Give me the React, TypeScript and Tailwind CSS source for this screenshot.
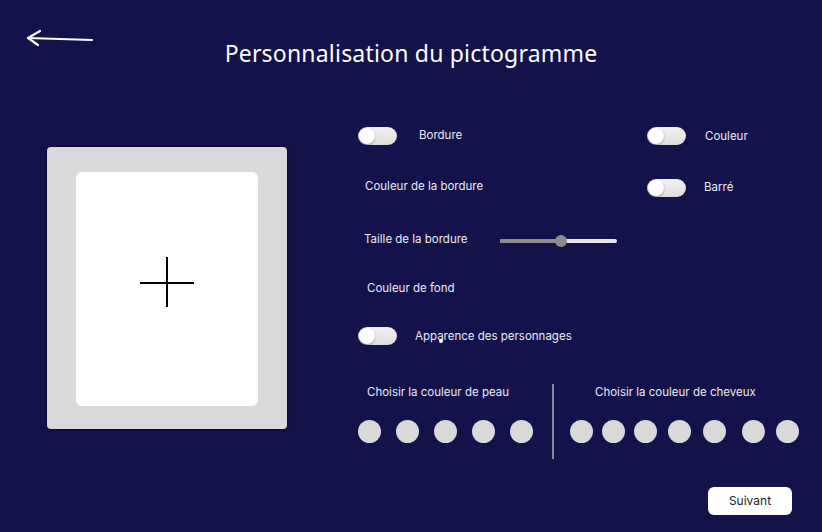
import React from 'react';

const Toggle = () => (
  <div className="relative w-[39px] h-[18px] rounded-full bg-gradient-to-b from-[#f2f2f2] to-[#dedede] shadow-[inset_0_0_1px_rgba(0,0,0,0.25)] shrink-0">
    <div className="absolute left-[1px] top-[1px] w-[16px] h-[16px] rounded-full bg-white shadow-[0_1px_2px_rgba(0,0,0,0.35)]" />
  </div>
);

const Dot = ({ className = '' }: { className?: string }) => (
  <div className={`w-[23px] h-[23px] rounded-full bg-[#d9d9d9] shrink-0 ${className}`} />
);

export default function App() {
  return (
    <div
      className="w-[822px] h-[532px] bg-[#13124a] text-[#ebebf2] overflow-hidden flex flex-col"
      style={{ fontFamily: 'Inter, "Noto Sans", sans-serif' }}
    >
      {/* Header */}
      <div className="grid grid-cols-[1fr_auto_1fr] pt-[28px]">
        <div className="pl-[25px] self-start">
          <svg width="70" height="20" viewBox="0 0 70 20" fill="none">
            <path d="M3 10 L67 12" stroke="white" strokeWidth="2.2" strokeLinecap="round" />
            <path d="M15 3 L3 10 L13 17" stroke="white" strokeWidth="2.2" strokeLinecap="round" strokeLinejoin="round" />
          </svg>
        </div>
        <h1
          className="mt-[10px] text-[23px] leading-[30px] font-normal text-white tracking-[0.2px]"
          style={{ fontFamily: '"Noto Sans", "Open Sans", sans-serif' }}
        >
          Personnalisation du pictogramme
        </h1>
        <div />
      </div>

      {/* Body */}
      <div className="flex">
        {/* Preview */}
        <div className="ml-[47px] mt-[79px] w-[240px] h-[282px] bg-[#d9d9d9] rounded-[4px] shadow-[0_0_1px_1px_rgba(0,0,0,0.35)] pl-[29px] pt-[25px]">
          <div className="w-[182px] h-[234px] bg-white rounded-[6px] pl-[64px] pt-[85px]">
            <svg width="54" height="50" viewBox="0 0 54 50">
              <path d="M0 26 H54" stroke="black" strokeWidth="2" />
              <path d="M27 0 V50" stroke="black" strokeWidth="2" />
            </svg>
          </div>
        </div>

        {/* Controls */}
        <div className="ml-[71px] mt-[43px] flex flex-col text-[11.5px]">
          <div className="h-[50px] flex items-center">
            <div className="w-[289px] flex items-center">
              <Toggle />
              <span className="ml-[22px] -mt-[1px]">Bordure</span>
            </div>
            <Toggle />
            <span className="ml-[19px] mt-[2px]">Couleur</span>
          </div>

          <div className="h-[51px] flex items-center">
            <div className="w-[289px] pl-[7px] mt-[1px]">Couleur de la bordure</div>
            <div className="flex items-center mt-[2px]">
              <Toggle />
              <span className="ml-[18px] mt-[1px]">Barré</span>
            </div>
          </div>

          <div className="h-[54px] flex items-center">
            <div className="w-[142px] pl-[6px] mt-[2px]">Taille de la bordure</div>
            <div className="relative w-[117px] h-[4px] mt-[4px] rounded-full bg-[#e6e6e6]">
              <div className="absolute left-0 top-0 h-[4px] w-[61px] rounded-full bg-[#8c8c8c]" />
              <div className="absolute left-[55px] top-[-4px] w-[12px] h-[12px] rounded-full bg-[#8c8c8c]" />
            </div>
          </div>

          <div className="h-[44px] flex items-center">
            <div className="pl-[9px] mt-[1px]">Couleur de fond</div>
          </div>

          <div className="h-[52px] flex items-center">
            <Toggle />
            <span className="relative ml-[18px] mt-[2px]">
              Apparence des personnages
              <span className="absolute left-[24px] top-[11px] w-[4px] h-[4px] rounded-full bg-white" />
            </span>
          </div>

          {/* Colour choices */}
          <div className="mt-[22px] flex">
            <div className="w-[194px] flex flex-col">
              <div className="pl-[9px] leading-[16px]">Choisir la couleur de peau</div>
              <div className="flex mt-[20px] gap-[15px]">
                <Dot />
                <Dot />
                <Dot />
                <Dot />
                <Dot />
              </div>
            </div>
            <div className="w-[2px] h-[75px] bg-[#8a8a8a]" />
            <div className="flex flex-col pl-[16px]">
              <div className="pl-[25px] leading-[16px]">Choisir la couleur de cheveux</div>
              <div className="flex mt-[20px]">
                <Dot />
                <Dot className="ml-[9px]" />
                <Dot className="ml-[9px]" />
                <Dot className="ml-[11px]" />
                <Dot className="ml-[12px]" />
                <Dot className="ml-[16px]" />
                <Dot className="ml-[11px]" />
              </div>
            </div>
          </div>
        </div>
      </div>

      {/* Footer */}
      <div className="flex justify-end pr-[30px] mt-[28px]">
        <button className="w-[84px] h-[28px] bg-white rounded-[6px] text-[12px] text-[#222]">Suivant</button>
      </div>
    </div>
  );
}
